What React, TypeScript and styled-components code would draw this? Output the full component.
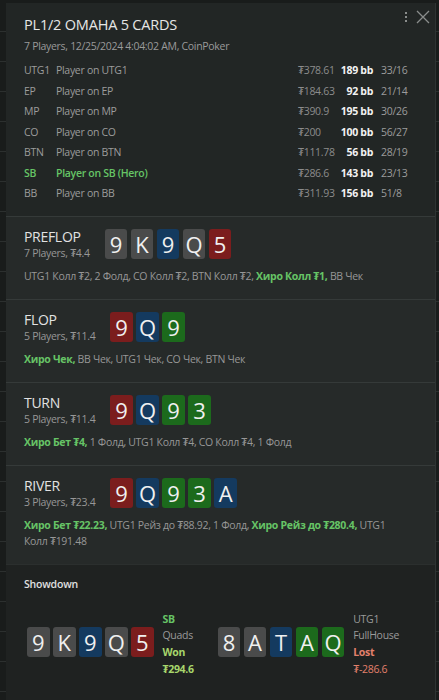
import React from 'react';
import styled, { createGlobalStyle } from 'styled-components';

type Suit = 'n' | 'b' | 'r' | 'g';

const suitBg: Record<Suit, string> = {
  n: '#4a4b4b',
  b: '#143a5f',
  r: '#7b1d1d',
  g: '#1c6a1c',
};

const GlobalStyle = createGlobalStyle`
  html, body {
    margin: 0;
    padding: 0;
  }
  body {
    background-color: #191c1b;
    background-image: repeating-linear-gradient(
      to bottom,
      transparent 0px,
      transparent 29px,
      #2c302f 29px,
      #2c302f 30px
    );
    background-position: 0 2px;
    font-family: 'Open Sans', 'Noto Sans', 'DejaVu Sans', sans-serif;
  }
`;

const Page = styled.div`
  display: flex;
  padding: 3px 3px 0 6px;
  height: 700px;
  box-sizing: border-box;
`;

const Dialog = styled.div`
  position: relative;
  flex: 1;
  display: flex;
  flex-direction: column;
  background: #222625;
  border-right: 1px solid #2e3332;
  overflow: hidden;
`;

const Toolbar = styled.div`
  position: absolute;
  top: 6px;
  right: 4px;
  display: flex;
  align-items: center;
  gap: 6px;
  color: #8a8d8c;
`;

const Header = styled.div`
  padding: 12px 10px 12px 18px;
`;

const Title = styled.div`
  font-size: 14.5px;
  color: #e6e6e6;
  letter-spacing: -0.2px;
  line-height: 20px;
`;

const Subtitle = styled.div`
  font-size: 10.5px;
  color: #9a9a9a;
  margin-top: 3px;
  line-height: 16px;
  letter-spacing: -0.3px;
`;

const PlayerTable = styled.div`
  display: grid;
  grid-template-columns: 32px 1fr 40px 35px 52px;
  grid-auto-rows: 20.5px;
  align-items: center;
  margin-top: 6px;
  font-size: 10.5px;
  letter-spacing: -0.3px;
`;

const Cell = styled.div<{ $hero?: boolean; $tone?: 'pos' | 'name' | 'amt' | 'stat' }>`
  white-space: nowrap;
  color: ${(p) =>
    p.$hero ? '#66c466' : p.$tone === 'amt' ? '#8c8c8c' : '#9c9c9c'};
  font-weight: ${(p) => (p.$hero ? 600 : 400)};
  padding-left: ${(p) => (p.$tone === 'stat' ? '8px' : '0')};
`;

const Stack = styled.div`
  text-align: right;
  font-weight: 700;
  color: #f2f2f2;
  white-space: nowrap;
`;

const Street = styled.section`
  background: #262a29;
  border-top: 1px solid #353a39;
  padding: 10px 40px 15px 18px;
`;

const StreetTop = styled.div`
  display: flex;
  align-items: center;
  gap: 15px;
`;

const StreetLabel = styled.div`
  display: flex;
  flex-direction: column;
`;

const StreetName = styled.div`
  font-size: 14px;
  color: #e2e2e2;
  line-height: 19.5px;
  letter-spacing: -0.3px;
`;

const StreetInfo = styled.div`
  font-size: 10.5px;
  color: #979797;
  line-height: 14.5px;
  letter-spacing: -0.3px;
`;

const Cards = styled.div`
  display: flex;
  gap: 3.5px;
`;

const Card = styled.div<{ $suit: Suit }>`
  width: 22.5px;
  height: 30px;
  border-radius: 3px;
  background: ${(p) => suitBg[p.$suit]};
  color: #f0f0f0;
  font-size: 22px;
  display: flex;
  align-items: center;
  justify-content: center;
  line-height: 1;
`;

const Actions = styled.div`
  margin-top: 7px;
  font-size: 10.5px;
  line-height: 16px;
  color: #979797;
  letter-spacing: -0.3px;
`;

const HeroAction = styled.span`
  color: #66c466;
  font-weight: 700;
`;

const Showdown = styled.section`
  flex: 1;
  background: #1f2221;
  border-top: 1px solid #2b2f2e;
  padding: 11px 18px;
`;

const ShowdownTitle = styled.div`
  font-size: 10.5px;
  color: #e0e0e0;
  font-weight: 600;
  line-height: 16px;
  letter-spacing: -0.2px;
`;

const Hands = styled.div`
  display: flex;
  gap: 24px;
  margin-top: 16px;
  padding-left: 3px;
`;

const Hand = styled.div`
  display: flex;
  align-items: center;
  gap: 9px;
`;

const HandInfo = styled.div`
  display: flex;
  flex-direction: column;
  font-size: 10.5px;
  line-height: 16.7px;
  letter-spacing: -0.3px;
  margin-top: 3px;
`;

const InfoLine = styled.div<{ $tone: 'hero' | 'muted' | 'won' | 'lost'; $bold?: boolean }>`
  white-space: nowrap;
  font-weight: ${(p) => (p.$bold ? 700 : 400)};
  color: ${(p) =>
    p.$tone === 'hero'
      ? '#66c466'
      : p.$tone === 'won'
      ? '#a7d66c'
      : p.$tone === 'lost'
      ? '#e2806c'
      : '#9a9a9a'};
`;

const players = [
  ['UTG1', 'Player on UTG1', '₮378.61', '189 bb', '33/16'],
  ['EP', 'Player on EP', '₮184.63', '92 bb', '21/14'],
  ['MP', 'Player on MP', '₮390.9', '195 bb', '30/26'],
  ['CO', 'Player on CO', '₮200', '100 bb', '56/27'],
  ['BTN', 'Player on BTN', '₮111.78', '56 bb', '28/19'],
  ['SB', 'Player on SB (Hero)', '₮286.6', '143 bb', '23/13'],
  ['BB', 'Player on BB', '₮311.93', '156 bb', '51/8'],
];

type Part = [string, boolean];

const streets: { name: string; info: string; cards: [string, Suit][]; actions: Part[] }[] = [
  {
    name: 'PREFLOP',
    info: '7 Players, ₮4.4',
    cards: [['9', 'n'], ['K', 'n'], ['9', 'b'], ['Q', 'n'], ['5', 'r']],
    actions: [
      ['UTG1 Колл ₮2, 2 Фолд, CO Колл ₮2, BTN Колл ₮2, ', false],
      ['Хиро Колл ₮1,', true],
      [' BB Чек', false],
    ],
  },
  {
    name: 'FLOP',
    info: '5 Players, ₮11.4',
    cards: [['9', 'r'], ['Q', 'b'], ['9', 'g']],
    actions: [
      ['Хиро Чек,', true],
      [' BB Чек, UTG1 Чек, CO Чек, BTN Чек', false],
    ],
  },
  {
    name: 'TURN',
    info: '5 Players, ₮11.4',
    cards: [['9', 'r'], ['Q', 'b'], ['9', 'g'], ['3', 'g']],
    actions: [
      ['Хиро Бет ₮4,', true],
      [' 1 Фолд, UTG1 Колл ₮4, CO Колл ₮4, 1 Фолд', false],
    ],
  },
  {
    name: 'RIVER',
    info: '3 Players, ₮23.4',
    cards: [['9', 'r'], ['Q', 'b'], ['9', 'g'], ['3', 'g'], ['A', 'b']],
    actions: [
      ['Хиро Бет ₮22.23,', true],
      [' UTG1 Рейз до ₮88.92, 1 Фолд, ', false],
      ['Хиро Рейз до ₮280.4,', true],
      [' UTG1', false],
      [' Колл ₮191.48', false],
    ],
  },
];

const KebabIcon = () => (
  <svg width="6" height="16" viewBox="0 0 6 16">
    <rect x="2" y="3" width="2" height="2" fill="currentColor" />
    <rect x="2" y="7" width="2" height="2" fill="currentColor" />
    <rect x="2" y="11" width="2" height="2" fill="currentColor" />
  </svg>
);

const CloseIcon = () => (
  <svg width="16" height="16" viewBox="0 0 16 16">
    <path d="M2 2 L14 14 M14 2 L2 14" stroke="currentColor" strokeWidth="1.3" fill="none" />
  </svg>
);

const App: React.FC = () => {
  return (
    <>
      <GlobalStyle />
      <Page>
        <Dialog>
          <Toolbar>
            <KebabIcon />
            <CloseIcon />
          </Toolbar>
          <Header>
            <Title>PL1/2 OMAHA 5 CARDS</Title>
            <Subtitle>7 Players, 12/25/2024 4:04:02 AM, CoinPoker</Subtitle>
            <PlayerTable>
              {players.map(([pos, name, amt, bb, stat]) => {
                const hero = pos === 'SB';
                return (
                  <React.Fragment key={pos}>
                    <Cell $hero={hero} $tone="pos">{pos}</Cell>
                    <Cell $hero={hero} $tone="name">{name}</Cell>
                    <Cell $tone="amt">{amt}</Cell>
                    <Stack>{bb}</Stack>
                    <Cell $tone="stat">{stat}</Cell>
                  </React.Fragment>
                );
              })}
            </PlayerTable>
          </Header>
          {streets.map((s) => (
            <Street key={s.name}>
              <StreetTop>
                <StreetLabel>
                  <StreetName>{s.name}</StreetName>
                  <StreetInfo>{s.info}</StreetInfo>
                </StreetLabel>
                <Cards>
                  {s.cards.map(([rank, suit], i) => (
                    <Card key={i} $suit={suit}>{rank}</Card>
                  ))}
                </Cards>
              </StreetTop>
              <Actions>
                {s.actions.map(([text, hero], i) =>
                  hero ? <HeroAction key={i}>{text}</HeroAction> : <span key={i}>{text}</span>
                )}
              </Actions>
            </Street>
          ))}
          <Showdown>
            <ShowdownTitle>Showdown</ShowdownTitle>
            <Hands>
              <Hand>
                <Cards>
                  <Card $suit="n">9</Card>
                  <Card $suit="n">K</Card>
                  <Card $suit="b">9</Card>
                  <Card $suit="n">Q</Card>
                  <Card $suit="r">5</Card>
                </Cards>
                <HandInfo>
                  <InfoLine $tone="hero" $bold>SB</InfoLine>
                  <InfoLine $tone="muted">Quads</InfoLine>
                  <InfoLine $tone="won" $bold>Won</InfoLine>
                  <InfoLine $tone="won" $bold>₮294.6</InfoLine>
                </HandInfo>
              </Hand>
              <Hand>
                <Cards>
                  <Card $suit="n">8</Card>
                  <Card $suit="n">A</Card>
                  <Card $suit="b">T</Card>
                  <Card $suit="g">A</Card>
                  <Card $suit="g">Q</Card>
                </Cards>
                <HandInfo>
                  <InfoLine $tone="muted">UTG1</InfoLine>
                  <InfoLine $tone="muted">FullHouse</InfoLine>
                  <InfoLine $tone="lost" $bold>Lost</InfoLine>
                  <InfoLine $tone="lost">₮-286.6</InfoLine>
                </HandInfo>
              </Hand>
            </Hands>
          </Showdown>
        </Dialog>
      </Page>
    </>
  );
};

export default App;
